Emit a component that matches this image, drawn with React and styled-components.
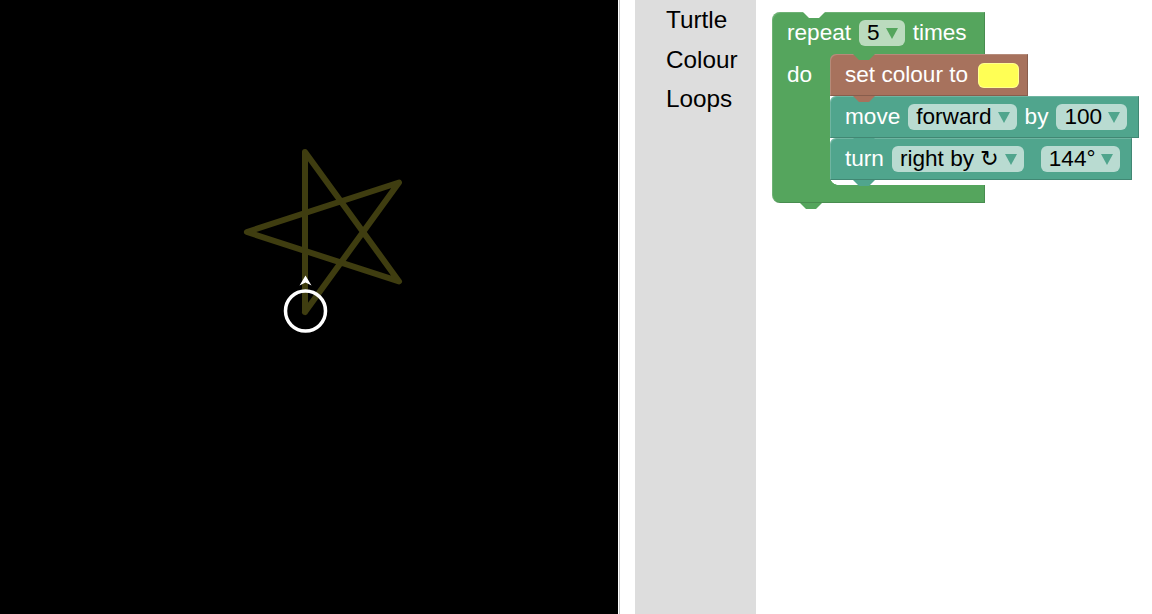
import React from "react";
import styled, { createGlobalStyle } from "styled-components";

const LOOP = "#55a55d";
const COLOUR = "#a7725d";
const TURTLE = "#50a58d";

const GlobalStyle = createGlobalStyle`
  html, body {
    margin: 0;
    padding: 0;
    height: 100%;
    overflow: hidden;
    background: #fff;
  }
  #root {
    height: 100%;
  }
`;

const Page = styled.div`
  display: flex;
  width: 100%;
  height: 614px;
  font-family: "Liberation Sans", Arial, sans-serif;
`;

const Canvas = styled.div`
  width: 618px;
  height: 100%;
  background: #000;
  flex-shrink: 0;
`;

const Splitter = styled.div`
  width: 15px;
  margin-left: 1px;
  border-left: 1px solid #c4c4c4;
  background: #fff;
  flex-shrink: 0;
`;

const Toolbox = styled.div`
  width: 121px;
  background: #dddddd;
  flex-shrink: 0;
  display: flex;
  flex-direction: column;
`;

const Category = styled.div`
  height: 39.5px;
  line-height: 39.5px;
  padding-left: 31px;
  font-size: 24.3px;
  color: #000;
`;

const Workspace = styled.div`
  flex: 1;
  background: #fff;
  padding: 12px 0 0 16px;
`;

const Loop = styled.div`
  position: relative;
  display: inline-flex;
  flex-direction: column;
`;

const LoopHead = styled.div`
  position: relative;
  width: 213px;
  height: 42px;
  box-sizing: border-box;
  padding-left: 15px;
  display: flex;
  align-items: center;
  gap: 8px;
  background: ${LOOP};
  border-top-left-radius: 8px;
  box-shadow: inset -1px 0 0 rgba(0, 0, 0, 0.15), inset 1px 1px 0 rgba(255, 255, 255, 0.15);
`;

const LoopBody = styled.div`
  display: flex;
`;

const Arm = styled.div`
  position: relative;
  width: 58px;
  box-sizing: border-box;
  padding: 8px 0 0 15px;
  background: ${LOOP};
  color: #fff;
  font-size: 22.6px;
  line-height: 26px;
  box-shadow: inset 1px 0 0 rgba(255, 255, 255, 0.15);

  &::before {
    content: "";
    position: absolute;
    top: 0;
    left: 100%;
    width: 8px;
    height: 8px;
    background: ${LOOP};
  }
  &::after {
    content: "";
    position: absolute;
    bottom: 0;
    left: 100%;
    width: 8px;
    height: 8px;
    background: radial-gradient(circle at 100% 0, transparent 7.5px, ${LOOP} 8px);
  }
`;

const Stack = styled.div`
  display: flex;
  flex-direction: column;
  align-items: flex-start;
  padding-bottom: 5px;
`;

const LoopFoot = styled.div`
  position: relative;
  width: 213px;
  height: 18px;
  background: ${LOOP};
  border-bottom-left-radius: 8px;
  box-shadow: inset -1px -1px 0 rgba(0, 0, 0, 0.15), inset 1px 0 0 rgba(255, 255, 255, 0.15);
`;

const Block = styled.div`
  position: relative;
  height: 42px;
  box-sizing: border-box;
  padding: 0 ${(p) => p.$pr || 12}px 0 15px;
  display: flex;
  align-items: center;
  gap: 8px;
  background: ${(p) => p.$color};
  border-top-left-radius: 6px;
  box-shadow: inset -1px -1px 0 rgba(0, 0, 0, 0.18), inset 1px 1px 0 rgba(255, 255, 255, 0.18);
`;

const Label = styled.span`
  color: #fff;
  font-size: 22.6px;
  line-height: 26px;
  white-space: nowrap;
`;

const Field = styled.span`
  height: 26px;
  box-sizing: border-box;
  padding: 0 7px 0 8px;
  margin-left: ${(p) => p.$ml || 0}px;
  display: inline-flex;
  align-items: center;
  gap: 6px;
  background: rgba(255, 255, 255, 0.6);
  border-radius: 6px;
  color: #000;
  font-size: 22.6px;
  white-space: nowrap;
`;

const Spin = styled.span`
  font-family: "DejaVu Sans", sans-serif;
  font-size: 22px;
`;

const Swatch = styled.span`
  width: 41px;
  height: 25px;
  margin-left: 2px;
  border-radius: 6px;
  background: #ffff55;
  box-shadow: inset 0 0 0 1px rgba(255, 255, 255, 0.35);
`;

const TabSvg = styled.svg`
  position: absolute;
  left: ${(p) => p.$left}px;
  ${(p) => (p.$top ? "top: 0;" : "bottom: -6px;")}
  z-index: 2;
`;

const Tab = ({ color, left, top }) => (
  <TabSvg $left={left} $top={top} width="22" height="6" viewBox="0 0 22 6">
    <path d="M0 0 L6 6 H16 L22 0 Z" fill={color} />
  </TabSvg>
);

const Arrow = ({ color }) => (
  <svg width="12" height="11" viewBox="0 0 12 11">
    <polygon points="0,0 12,0 6,11" fill={color} />
  </svg>
);

const Dropdown = ({ children, color, ml }) => (
  <Field $ml={ml}>
    {children}
    <Arrow color={color} />
  </Field>
);

const TurtleCanvas = () => {
  const star = "305,312 305,152 399,281.4 246.9,232 399,182.5 305,312";
  return (
    <svg width="618" height="614" viewBox="0 0 618 614">
      <polyline
        points={star}
        fill="none"
        stroke="#3f3d10"
        strokeWidth="6"
        strokeLinejoin="round"
        strokeLinecap="round"
      />
      <circle cx="305.5" cy="311" r="20" fill="none" stroke="#fff" strokeWidth="3.5" />
      <polygon points="305.5,275.5 311.5,285.5 305.5,282.5 299.5,285.5" fill="#fff" />
    </svg>
  );
};

export default function App() {
  return (
    <>
      <GlobalStyle />
      <Page>
        <Canvas>
          <TurtleCanvas />
        </Canvas>
        <Splitter />
        <Toolbox>
          <Category>Turtle</Category>
          <Category>Colour</Category>
          <Category>Loops</Category>
        </Toolbox>
        <Workspace>
          <Loop>
            <Tab color="#fff" left={31} top />
            <LoopHead>
              <Label>repeat</Label>
              <Dropdown color={LOOP}>5</Dropdown>
              <Label>times</Label>
              <Tab color={LOOP} left={81} />
            </LoopHead>
            <LoopBody>
              <Arm>do</Arm>
              <Stack>
                <Block $color={COLOUR} $pr={9}>
                  <Label>set colour to</Label>
                  <Swatch />
                  <Tab color={COLOUR} left={23} />
                </Block>
                <Block $color={TURTLE}>
                  <Label>move</Label>
                  <Dropdown color={TURTLE}>forward</Dropdown>
                  <Label>by</Label>
                  <Dropdown color={TURTLE}>100</Dropdown>
                  <Tab color={TURTLE} left={23} />
                </Block>
                <Block $color={TURTLE}>
                  <Label>turn</Label>
                  <Dropdown color={TURTLE}>
                    <span>
                      right by <Spin>↻</Spin>
                    </span>
                  </Dropdown>
                  <Dropdown color={TURTLE} ml={9}>
                    144°
                  </Dropdown>
                  <Tab color={TURTLE} left={23} />
                </Block>
              </Stack>
            </LoopBody>
            <LoopFoot>
              <Tab color={LOOP} left={28} />
            </LoopFoot>
          </Loop>
        </Workspace>
      </Page>
    </>
  );
}
